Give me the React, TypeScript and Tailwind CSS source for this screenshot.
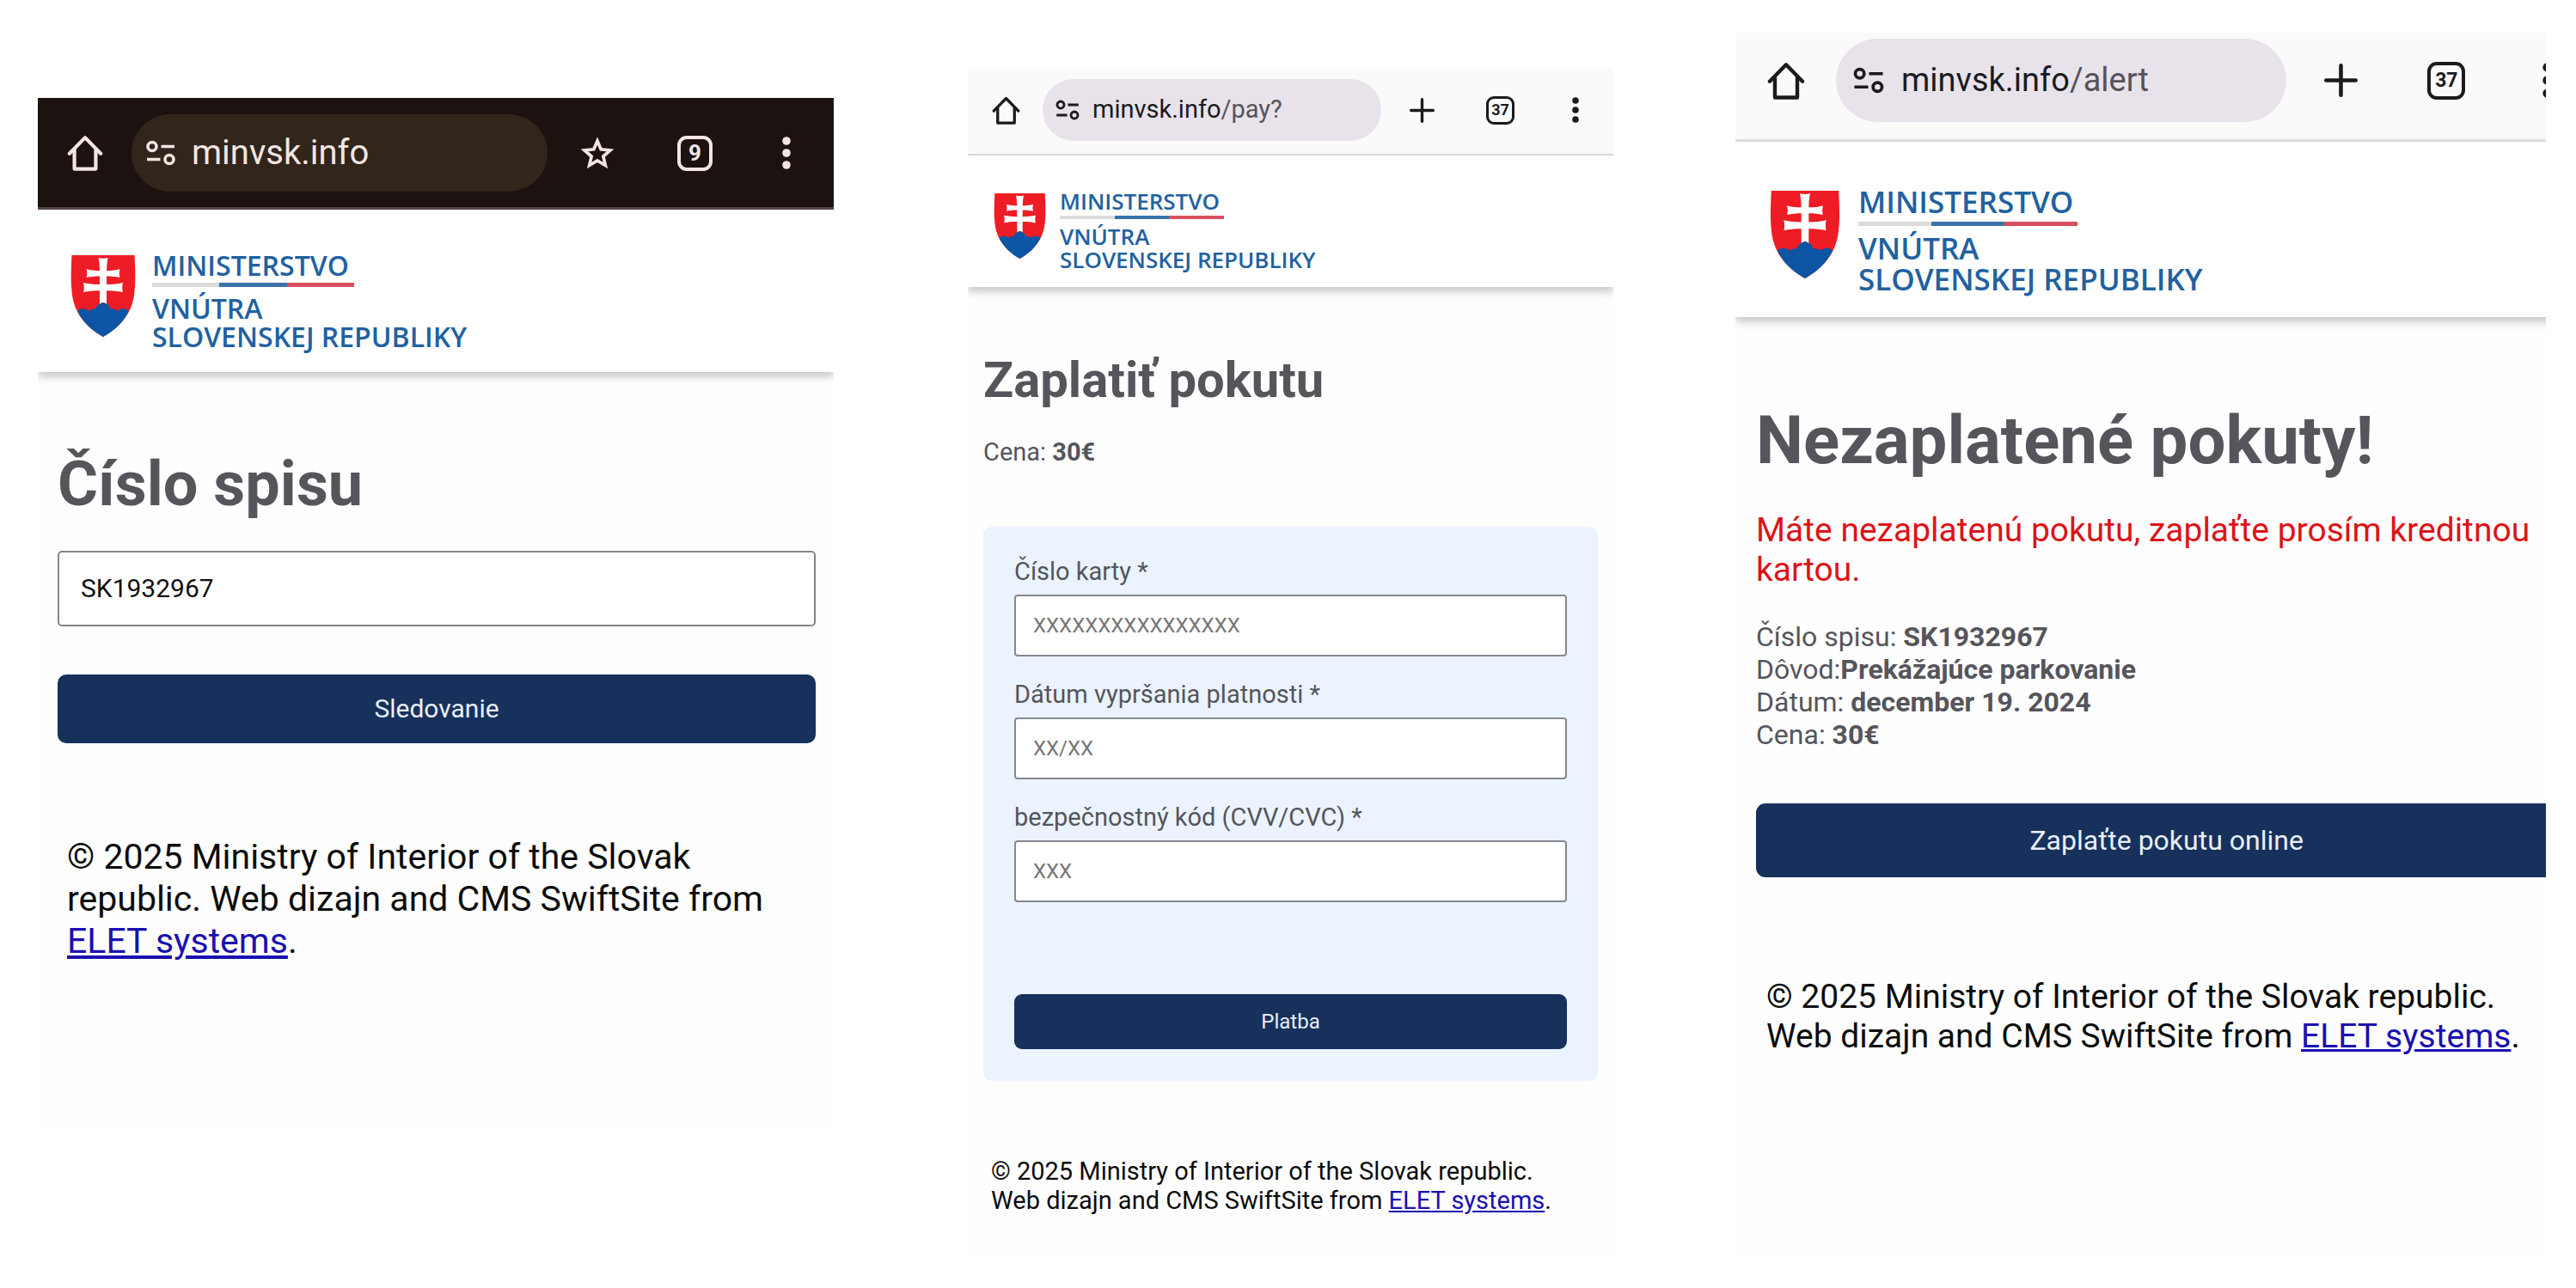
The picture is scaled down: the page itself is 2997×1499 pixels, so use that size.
import type { ReactNode } from 'react';

type Size = 'sm' | 'md' | 'lg';

const bar = {
  md: {
    root: 'pl-[34px] pr-[50px] pt-[19px] pb-[18px] border-b-[3px] bg-[#1c1210] border-[#574845] text-[#f3e6e2]',
    home: 'size-[42px]',
    pill: 'ml-[33px] h-[90px] pl-[17px] gap-[19px] text-[40px] bg-[#31251c]',
    tune: 'w-[34px] h-[30px]',
    action: 'ml-[38px] size-[40px]',
    tabs: 'ml-[73px] size-[41px] border-4 rounded-[11px] text-[26px]',
    dots: 'ml-[81px] w-[10px] h-[38px]',
    path: '',
  },
  sm: {
    root: 'pl-[28px] pr-[40px] pt-[13px] pb-[15px] border-b-2 bg-[#fafafa] border-[#dfdee0] text-[#1b1a1e]',
    home: 'size-[33px]',
    pill: 'ml-[26px] h-[72px] pl-[15px] gap-[15px] text-[29px] bg-[#e8e3ea]',
    tune: 'w-[28px] h-[24px]',
    action: 'ml-[33px] size-[29px]',
    tabs: 'ml-[60px] size-[33px] border-[3px] rounded-[9px] text-[18px]',
    dots: 'ml-[67px] w-[8px] h-[30px]',
    path: 'text-[#56525a]',
  },
  lg: {
    root: 'pl-[37px] pr-[53px] pt-[7px] pb-[20px] border-b-[3px] bg-[#fafafa] border-[#e2e1e3] text-[#1b1a1e]',
    home: 'size-[44px]',
    pill: 'ml-[36px] h-[97px] pl-[20px] gap-[20px] text-[38px] bg-[#e8e3ea]',
    tune: 'w-[36px] h-[31px]',
    action: 'ml-[44px] size-[39px]',
    tabs: 'ml-[81px] size-[44px] border-4 rounded-[11px] text-[23px]',
    dots: 'ml-[90px] w-[11px] h-[41px]',
    path: 'text-[#56525a]',
  },
};

const logo = {
  md: {
    root: 'pl-[38px] gap-[19px] pt-[48px] pb-[25px]',
    shield: 'mt-[5px] w-[76px] h-[95px]',
    text: 'text-[32px] leading-[33px]',
    line: 'mt-[4px] mb-[8px] h-[5px] w-[235px]',
  },
  sm: {
    root: 'pl-[30px] gap-[16px] pt-[40px] pb-[18px]',
    shield: 'mt-[4px] w-[61px] h-[76px]',
    text: 'text-[26px] leading-[27px]',
    line: 'mt-[3px] mb-[7px] h-[4px] w-[191px]',
  },
  lg: {
    root: 'pl-[40px] gap-[21px] pt-[52px] pb-[26px]',
    shield: 'mt-[5px] w-[82px] h-[102px]',
    text: 'text-[35px] leading-[36px]',
    line: 'mt-[5px] mb-[8px] h-[5px] w-[255px]',
  },
};

function HomeIcon({ className }: { className: string }) {
  return (
    <svg className={className} viewBox="0 0 24 24" fill="none" stroke="currentColor" strokeWidth="2.4" strokeLinejoin="round" strokeLinecap="round" aria-hidden="true">
      <path d="M1.6 12.4 12 1.8l10.4 10.6" />
      <path d="M4.9 10v12.6h14.2V10" />
    </svg>
  );
}

function TuneIcon({ className }: { className: string }) {
  return (
    <svg className={className} viewBox="0 0 34 30" fill="none" stroke="currentColor" strokeWidth="3.6" aria-hidden="true">
      <circle cx="7" cy="7.5" r="5" />
      <path d="M17.5 7.5H33M1 22.5h15.5" />
      <circle cx="27" cy="22.5" r="5" />
    </svg>
  );
}

function StarIcon() {
  return (
    <svg className="size-full" viewBox="0 0 24 24" fill="none" stroke="currentColor" strokeWidth="2.2" aria-hidden="true">
      <path d="M12 3.6 14.5 9.5 21 10.1 16.1 14.4 17.6 20.7 12 17.4 6.4 20.7 7.9 14.4 3 10.1 9.5 9.5Z" />
    </svg>
  );
}

function PlusIcon() {
  return (
    <svg className="size-full" viewBox="0 0 24 24" fill="none" stroke="currentColor" strokeWidth="2.8" strokeLinecap="round" aria-hidden="true">
      <path d="M12 1.4v21.2M1.4 12h21.2" />
    </svg>
  );
}

function DotsIcon() {
  return (
    <svg className="size-full" viewBox="0 0 10 38" fill="currentColor" aria-hidden="true">
      <circle cx="5" cy="5" r="4.8" />
      <circle cx="5" cy="19" r="4.8" />
      <circle cx="5" cy="33" r="4.8" />
    </svg>
  );
}

function Shield({ className }: { className: string }) {
  return (
    <svg className={className} viewBox="0 0 75 95" aria-hidden="true">
      <path fill="#ee1c25" d="M1 0h73c.8 16 1.5 31-.3 45C71 68 57 84 37.5 95 18 84 4 68 1.3 45-.5 31 .2 16 1 0Z" />
      {/* Hills */}
      <path fill="#0b55a4" d="M7.5 65c5-4 9-4 13 0 2-2 5-3 8-2 1-4 5-8 9-8s8 4 9 8c3-1 6 0 8 2 4-4 8-4 13 0C61 78 51 87.5 37.5 95 24 87.5 14 78 7.5 65Z" />
      {/* Double cross */}
      <path
        fill="#fff"
        d="M32 3c4 1 7 1 11 0-1 5-1.5 10-1.5 15 6 0 11-.5 15.5-2-1 4-1 7 0 10-5-1-10-1.5-15.5-1.500V34c7 0 13-.5 19-2-1 4-1 8 0 11-6-1.300-12-1.800-19-1.800V57c-1-1.300-2.500-2-4-2s-3 .7-4 2V41.200c-7 0-13 .5-19 1.800 1-3 1-7 0-11 6 1.500 12 2 19 2v-9.500c-5.500 0-10.500.5-15.500 1.500 1-3 1-6 0-10 4.500 1.500 9.500 2 15.500 2 0-5-.5-10-1.500-15Z"
      />
    </svg>
  );
}

function BrowserBar({ size, host, path, tabs }: { size: Size; host: string; path?: string; tabs: number }) {
  const s = bar[size];
  return (
    <div className={`flex items-center ${s.root}`}>
      <button type="button" aria-label="Home" className="shrink-0">
        <HomeIcon className={s.home} />
      </button>
      <div className={`flex flex-1 items-center whitespace-nowrap rounded-full ${s.pill}`}>
        <TuneIcon className={`shrink-0 ${s.tune}`} />
        <span>
          {host}
          <span className={s.path}>{path}</span>
        </span>
      </div>
      <button type="button" aria-label={size === 'md' ? 'Bookmark' : 'New tab'} className={`shrink-0 ${s.action}`}>
        {size === 'md' ? <StarIcon /> : <PlusIcon />}
      </button>
      <button type="button" className={`flex shrink-0 items-center justify-center border-current font-bold leading-none ${s.tabs}`}>
        {tabs}
      </button>
      <button type="button" aria-label="Menu" className={`shrink-0 ${s.dots}`}>
        <DotsIcon />
      </button>
    </div>
  );
}

function Logo({ size }: { size: Size }) {
  const s = logo[size];
  return (
    <header className={`flex items-start bg-white shadow-[0_5px_10px_rgba(0,0,0,0.24)] ${s.root}`}>
      <Shield className={`shrink-0 ${s.shield}`} />
      <div className={`whitespace-nowrap font-['Open_Sans',sans-serif] font-semibold text-[#21619f] ${s.text}`}>
        <p>MINISTERSTVO</p>
        <div className={`flex ${s.line}`}>
          <span className="flex-1 bg-[#dcdcdd]" />
          <span className="flex-1 bg-[#3a72a8]" />
          <span className="flex-1 bg-[#d8505d]" />
        </div>
        <p>VNÚTRA</p>
        <p>SLOVENSKEJ REPUBLIKY</p>
      </div>
    </header>
  );
}

function Footer({ className }: { className: string }) {
  return (
    <footer className={`text-[#0c0c0c] ${className}`}>
      © 2025 Ministry of Interior of the Slovak republic. Web dizajn and CMS SwiftSite from{' '}
      <a href="#" className="text-[#1a10b0] underline">ELET systems</a>.
    </footer>
  );
}

function Button({ className, children }: { className: string; children: ReactNode }) {
  return (
    <button type="button" className={`block w-full bg-[#17315c] text-center text-[#e9effa] ${className}`}>
      {children}
    </button>
  );
}

function CasePanel() {
  return (
    <section className="mt-[114px] min-w-0 flex-[926] overflow-hidden bg-[#fefefe]">
      <BrowserBar size="md" host="minvsk.info" tabs={9} />
      <Logo size="md" />
      <main className="pl-[23px] pr-[21px] pt-[89px] pb-[188px]">
        <h1 className="text-[72px] leading-[84px] font-bold text-[#55555c]">
          <label htmlFor="case">Číslo spisu</label>
        </h1>
        <input
          id="case"
          defaultValue="SK1932967"
          className="mt-[35px] block h-[88px] w-full rounded-[5px] border-2 border-[#858585] bg-white pl-[25px] pb-[2px] text-[30px] text-[#111]"
        />
        <Button className="mt-[56px] h-[80px] rounded-[10px] pb-[2px] text-[30px]">Sledovanie</Button>
        <Footer className="mt-[108px] px-[11px] text-[41px] leading-[49px]" />
      </main>
    </section>
  );
}

const cardFields = [
  { id: 'card', label: 'Číslo karty *', placeholder: 'XXXXXXXXXXXXXXXX' },
  { id: 'expiry', label: 'Dátum vypršania platnosti *', placeholder: 'XX/XX' },
  { id: 'cvc', label: 'bezpečnostný kód (CVV/CVC) *', placeholder: 'XXX' },
];

function PayPanel() {
  return (
    <section className="mt-[79px] ml-[156px] min-w-0 flex-[751] overflow-hidden bg-[#fefefe]">
      <BrowserBar size="sm" host="minvsk.info" path="/pay?" tabs={37} />
      <Logo size="sm" />
      <main className="px-[18px] pt-[74px] pb-[46px] text-[29px] leading-[34px] text-[#55555c]">
        <h1 className="text-[58px] leading-[68px] font-bold">Zaplatiť pokutu</h1>
        <p className="mt-[33px]">
          Cena: <b>30€</b>
        </p>
        <div className="mt-[70px] rounded-[9px] bg-[#ebf3ff] px-[36px] pt-[35px] pb-[37px]">
          <div className="flex flex-col gap-[27px]">
            {cardFields.map(({ id, label, placeholder }) => (
              <div key={id}>
                <label htmlFor={id} className="block">{label}</label>
                <input
                  id={id}
                  placeholder={placeholder}
                  className="mt-[10px] block h-[72px] w-full rounded-[4px] border-2 border-[#858890] bg-white pl-[20px] text-[24px] placeholder:text-[#757575]"
                />
              </div>
            ))}
          </div>
          <Button className="mt-[107px] h-[64px] rounded-[9px] text-[24px]">Platba</Button>
        </div>
        <Footer className="mt-[88px] pl-[9px] pr-[30px]" />
      </main>
    </section>
  );
}

function AlertPanel() {
  return (
    <section className="mt-[38px] ml-[142px] min-w-0 flex-[943] overflow-hidden bg-[#fefefe]">
      {/* The page is wider than the visible frame, its right edge is cut */}
      <div className="w-[106.4%]">
        <BrowserBar size="lg" host="minvsk.info" path="/alert" tabs={37} />
        <Logo size="lg" />
        <main className="px-[24px] pt-[98px] pb-[232px] text-[32px] leading-[38px] text-[#55555c]">
          <h1 className="text-[78px] leading-[91px] font-bold">Nezaplatené pokuty!</h1>
          <p className="mt-[36px] text-[39px] leading-[46px] text-[#dc1417]">
            Máte nezaplatenú pokutu, zaplaťte prosím kreditnou kartou.
          </p>
          <div className="mt-[36px]">
            <p>Číslo spisu: <b>SK1932967</b></p>
            <p>Dôvod:<b>Prekážajúce parkovanie</b></p>
            <p>Dátum: <b>december 19. 2024</b></p>
            <p>Cena: <b>30€</b></p>
          </div>
          <Button className="mt-[61px] h-[86px] rounded-[11px]">Zaplaťte pokutu online</Button>
          <Footer className="mt-[116px] pl-[12px] pr-[47px] text-[39px] leading-[46px]" />
        </main>
      </div>
    </section>
  );
}

export default function App() {
  return (
    <div className="flex min-h-screen items-start bg-white pl-[44px] pr-[35px] font-[Roboto,sans-serif]">
      <CasePanel />
      <PayPanel />
      <AlertPanel />
    </div>
  );
}
